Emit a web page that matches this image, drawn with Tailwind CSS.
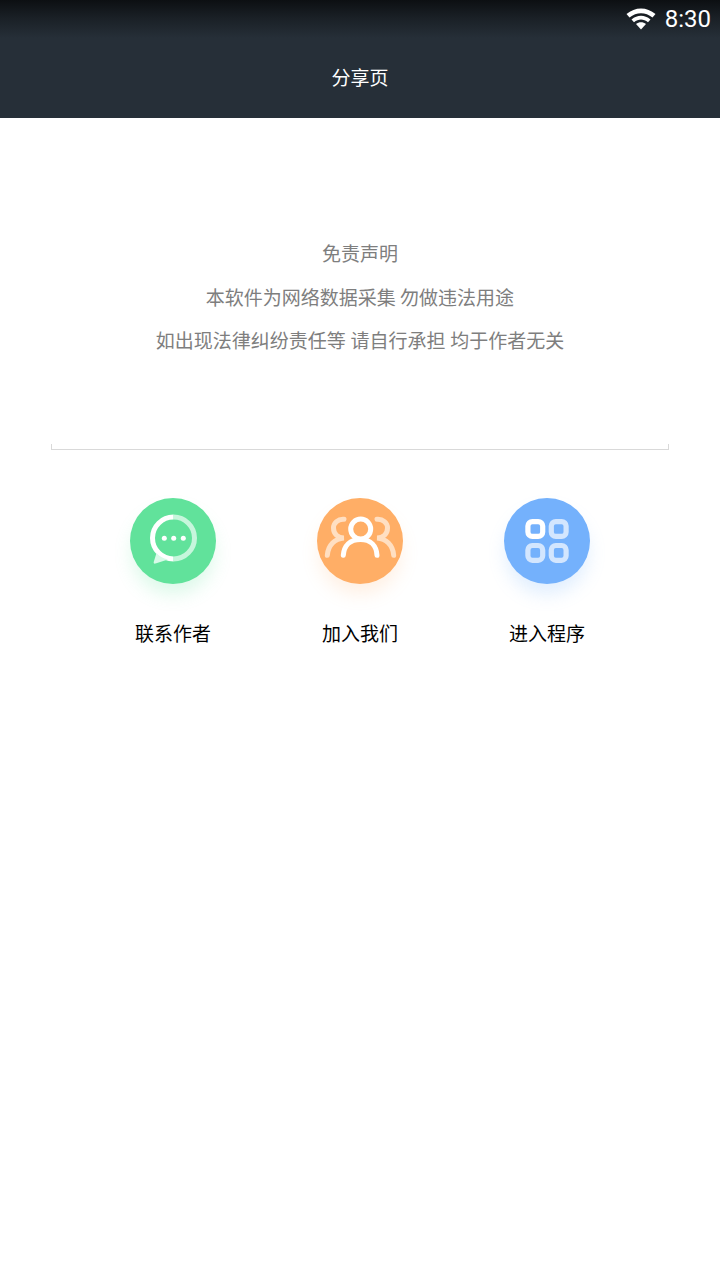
<!DOCTYPE html>
<html lang="zh-CN">
<head>
  <meta charset="UTF-8">
  <meta name="viewport" content="width=device-width, initial-scale=1.0">
  <title>分享页</title>
  <script src="https://cdn.jsdelivr.net/npm/@tailwindcss/browser@4"></script>
</head>
<body class="bg-white min-h-screen font-['Noto_Sans_CJK_SC','Noto_Sans',sans-serif]">
  <!-- 顶部栏 -->
  <header class="h-[118px] bg-[linear-gradient(to_bottom,#0c0f12_0px,#1a2026_18px,#262f38_38px,#262f38_100%)] flex flex-col">
    <div class="h-[38px] flex items-center justify-end pr-[9px] gap-[9px]">
      <svg width="30" height="22" viewBox="0 0 30 22" class="mt-[-1px]">
        <path d="M0.500 6 C9 -1.500 21 -1.500 29.500 6 L26.500 9.500 C19.500 3.700 10.500 3.700 3.500 9.500 Z" fill="#fff"/>
        <path d="M5.500 11.500 C11.500 6.500 18.500 6.500 24.500 11.500 L22 14.200 C17.500 10.600 12.500 10.600 8 14.200 Z" fill="#fff"/>
        <path d="M10 16 C13 13.600 17 13.600 20 16 L15 21.500 Z" fill="#fff"/>
      </svg>
      <span class="text-[24px] leading-none text-white font-['Roboto',sans-serif]">8:30</span>
    </div>
    <div class="h-[80px] flex items-center justify-center text-[19px] text-white pb-[1px]">分享页</div>
  </header>

  <!-- 免责声明 -->
  <section class="pt-[113px] text-center text-[19px] leading-[44px] text-[#7e7e7e]">
    <p>免责声明</p>
    <p class="mt-[-0.5px]">本软件为网络数据采集 勿做违法用途</p>
    <p class="mt-[-0.5px] [word-spacing:0.5px]">如出现法律纠纷责任等 请自行承担 均于作者无关</p>
  </section>

  <div class="mx-[51px] mt-[82px] h-[6px] border border-t-0 border-[#d9d9d9]"></div>

  <!-- 入口 -->
  <div class="mt-[48px] flex justify-center">
    <div class="w-[187px] flex flex-col items-center">
      <div class="w-[86px] h-[86px] rounded-full bg-[#61e29b] shadow-[0_12px_18px_-2px_rgba(97,226,155,0.22)]">
        <svg width="86" height="86" viewBox="0 0 86 86">
          <path d="M43.500 19 A21 21 0 0 1 43.500 61" fill="none" stroke="#c6f6dc" stroke-width="5"/>
          <path d="M43.500 19 A21 21 0 0 0 43.500 61" fill="none" stroke="#fff" stroke-width="5"/>
          <path d="M26.500 55 L23.700 64 C23.500 65.500 24.300 66 25.500 65.600 L38 61.500 C33 60.500 29 58 26.500 55 Z" fill="#d8fae8"/>
          <circle cx="34.300" cy="40.300" r="2.500" fill="#fff"/>
          <circle cx="43.700" cy="40.300" r="2.500" fill="#fff"/>
          <circle cx="53.300" cy="40.300" r="2.500" fill="#fff"/>
        </svg>
      </div>
      <span class="mt-[35px] text-[19px] leading-[28px] text-black">联系作者</span>
    </div>
    <div class="w-[187px] flex flex-col items-center">
      <div class="w-[86px] h-[86px] rounded-full bg-[#ffae66] shadow-[0_12px_18px_-2px_rgba(255,174,102,0.18)]">
        <svg width="86" height="86" viewBox="0 0 86 86">
          <g fill="none" stroke-width="5" stroke-linecap="round">
            <path d="M27 21.300 C21 20.800 16.500 25 16.500 30 C16.500 36 21 40 27 40 C18 40.500 11 47 10.300 57.300" stroke="#fff" stroke-opacity="0.6"/>
            <path d="M60 21.300 C66 20.800 70.500 25 70.500 30 C70.500 36 66 40 60 40 C69 40.500 76 47 76.700 57.300" stroke="#fff" stroke-opacity="0.6"/>
            <circle cx="43.700" cy="31" r="10" stroke="#fff"/>
            <path d="M26.300 57.300 C27 48 33 41.500 43.500 41.500 C54 41.500 59.500 48 60 57.300" stroke="#fff"/>
          </g>
        </svg>
      </div>
      <span class="mt-[35px] text-[19px] leading-[28px] text-black">加入我们</span>
    </div>
    <div class="w-[187px] flex flex-col items-center">
      <div class="w-[86px] h-[86px] rounded-full bg-[#74b1fc] shadow-[0_12px_18px_-2px_rgba(116,177,252,0.22)]">
        <svg width="86" height="86" viewBox="0 0 86 86">
          <g fill="none" stroke-width="5.200">
            <rect x="23.900" y="23.600" width="14.800" height="14.800" rx="4.500" stroke="#fff"/>
            <rect x="47.300" y="23.600" width="14.800" height="14.800" rx="4.500" stroke="#d3e6fe"/>
            <rect x="23.900" y="47.500" width="14.800" height="14.800" rx="4.500" stroke="#d3e6fe"/>
            <rect x="47.300" y="47.500" width="14.800" height="14.800" rx="4.500" stroke="#d3e6fe"/>
          </g>
        </svg>
      </div>
      <span class="mt-[35px] text-[19px] leading-[28px] text-black">进入程序</span>
    </div>
  </div>
</body>
</html>
